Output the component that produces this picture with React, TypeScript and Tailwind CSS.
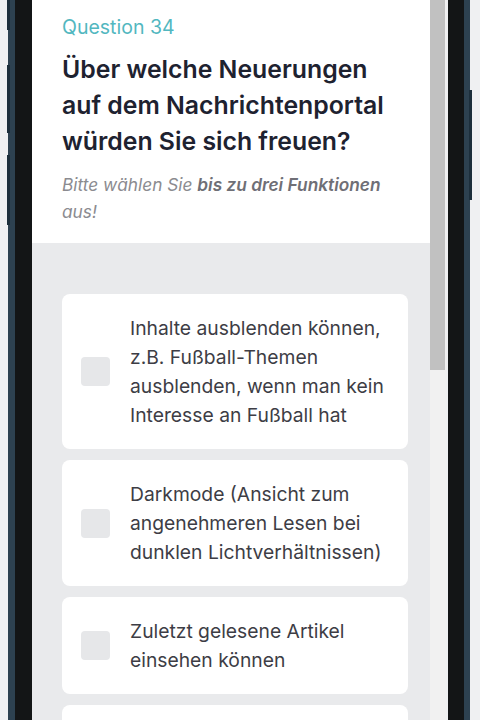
import React from "react";

const options = [
  "Inhalte ausblenden können, z.B. Fußball-Themen ausblenden, wenn man kein Interesse an Fußball hat",
  "Darkmode (Ansicht zum angenehmeren Lesen bei dunklen Lichtverhältnissen)",
  "Zuletzt gelesene Artikel einsehen können",
];

export default function App() {
  return (
    <div
      className="w-[480px] h-[720px] overflow-hidden flex bg-[#eff0f2]"
      style={{ fontFamily: "Inter, 'Noto Sans', sans-serif" }}
    >
      {/* left bezel */}
      <div className="flex h-full shrink-0">
        <div className="w-[8px] h-full bg-[#eff0f2]" />
        <div className="relative w-[7px] h-full bg-[#2d4150]">
          <div className="absolute left-[-1px] top-0 w-[3px] h-[30px] bg-[#1d2f3c]" />
          <div className="absolute left-[-1px] top-[65px] w-[3px] h-[68px] bg-[#1d2f3c]" />
          <div className="absolute left-[-1px] top-[155px] w-[3px] h-[70px] bg-[#1d2f3c]" />
        </div>
        <div className="w-[17px] h-full bg-[#131516]" />
      </div>

      {/* screen */}
      <div className="w-[398px] h-full shrink-0 flex flex-col bg-[#e9eaec] overflow-hidden">
        <div className="bg-white pl-[30px] pr-[20px] pt-[14px] pb-[18px]">
          <div className="text-[19.5px] leading-[27px] text-[#52b7c0]">Question 34</div>
          <h1 className="mt-[10px] text-[24.8px] leading-[36px] font-semibold text-[#1e2230]">
            Über welche Neuerungen auf dem Nachrichtenportal würden Sie sich freuen?
          </h1>
          <p className="mt-[12px] text-[17.3px] leading-[27px] italic text-[#8b8b90]">
            Bitte wählen Sie <span className="font-semibold text-[#6f6f76]">bis zu drei Funktionen</span> aus!
          </p>
        </div>
        <div className="flex flex-col gap-[11px] pl-[30px] pr-[22px] pt-[51px]">
          {options.map((o) => (
            <div key={o} className="bg-white rounded-[8px] flex items-center pl-[19px] pr-[16px] py-[19.5px]">
              <div className="w-[29px] h-[29px] rounded-[4px] bg-[#e6e7e9] shrink-0" />
              <div className="ml-[20px] text-[19.3px] leading-[29px] text-[#3d3d45]">{o}</div>
            </div>
          ))}
          <div className="bg-white rounded-[8px] h-[100px] shrink-0" />
        </div>
      </div>

      {/* scrollbar */}
      <div className="w-[16px] h-full shrink-0 bg-[#f1f1f1] flex flex-col">
        <div className="h-[370px] w-[15px] bg-[#c1c1c1]" />
      </div>

      {/* right bezel */}
      <div className="flex h-full shrink-0">
        <div className="w-[2px] h-full bg-[#eff0f2]" />
        <div className="w-[16px] h-full bg-[#131516]" />
        <div className="relative w-[6px] h-full bg-[#2d4150]">
          <div className="absolute right-[-2px] top-[90px] w-[3px] h-[110px] bg-[#1d2f3c]" />
        </div>
        <div className="w-[10px] h-full bg-[#eff0f2]" />
      </div>
    </div>
  );
}
